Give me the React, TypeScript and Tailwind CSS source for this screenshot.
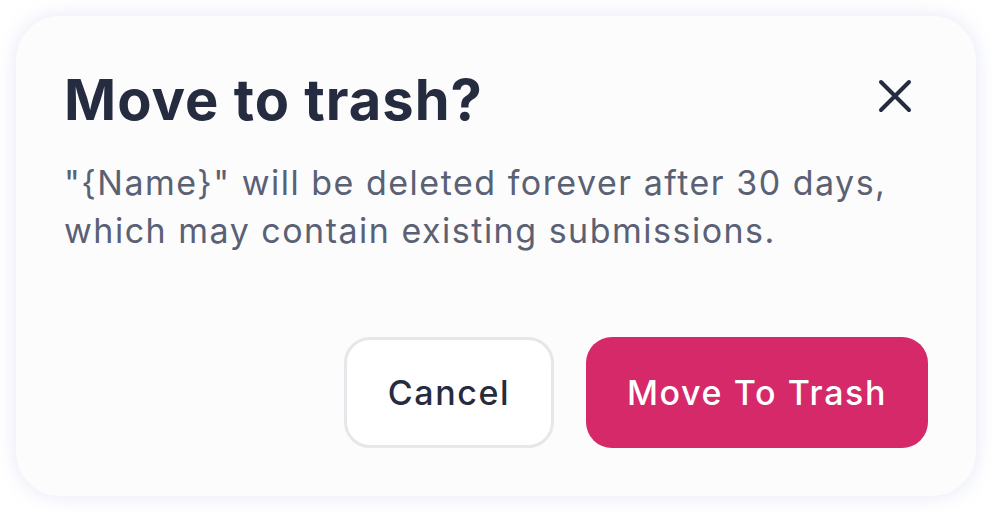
import React from "react"

const App: React.FC = () => {
  return (
    <div
      className="w-full h-[512px] bg-white p-4"
      style={{ fontFamily: "Inter, 'Noto Sans', sans-serif" }}
    >
      <div className="flex flex-col w-full h-full rounded-[44px] bg-[#fcfcfd] shadow-[0_0_20px_rgba(200,205,235,0.45)] px-12 pt-[50px] pb-12">
        <div className="flex justify-between items-start">
          <h1 className="text-[56px] leading-[68px] font-bold text-[#262c40] tracking-[1px]">
            Move to trash?
          </h1>
          <button className="mt-[13px] mr-[16px] text-[#262c40]" aria-label="Close">
            <svg width="34" height="34" viewBox="0 0 34 34" fill="none">
              <path d="M3 3L31 31M31 3L3 31" stroke="currentColor" strokeWidth="4" strokeLinecap="round" />
            </svg>
          </button>
        </div>
        <p className="mt-[25px] text-[34px] leading-[48px] tracking-[1.5px] text-[#5b6174]">
          "{"{Name}"}" will be deleted forever after 30 days,
          <br />
          which may contain existing submissions.
        </p>
        <div className="mt-auto flex justify-end gap-8">
          <button className="h-[111px] w-[210px] rounded-[26px] border-[3px] border-[#e5e7eb] bg-white text-[34px] font-medium tracking-[1.6px] text-[#262c40]">
            Cancel
          </button>
          <button className="h-[111px] w-[342px] rounded-[26px] bg-[#d5296a] text-[34px] font-medium tracking-[1.6px] text-white">
            Move To Trash
          </button>
        </div>
      </div>
    </div>
  )
}

export default App
